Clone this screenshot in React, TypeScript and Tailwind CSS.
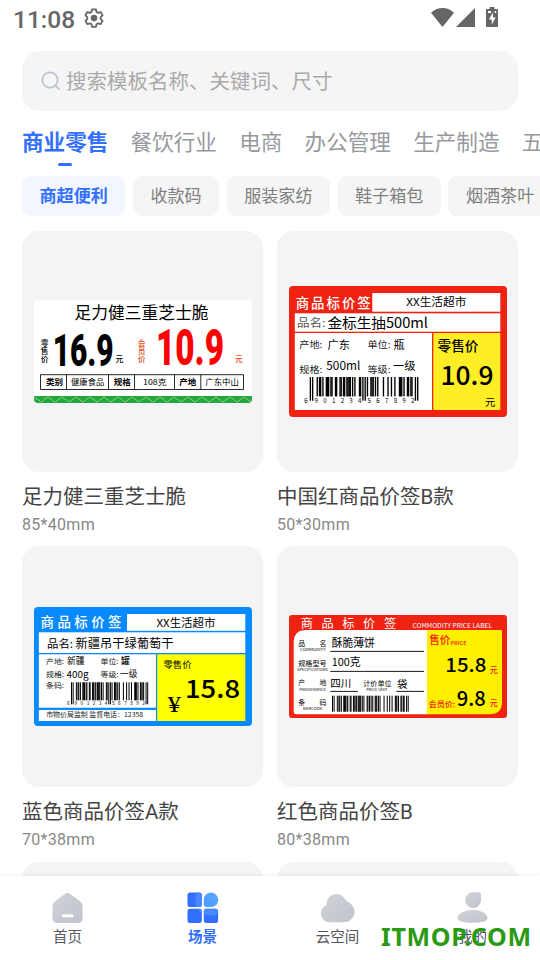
import type { ReactNode } from 'react';

const CJK = '"Noto Sans CJK SC", sans-serif';

const tabs = ['商业零售', '餐饮行业', '电商', '办公管理', '生产制造', '五金建材'];
const categories = ['商超便利', '收款码', '服装家纺', '鞋子箱包', '烟酒茶叶'];

type TProps = {
    x: number;
    y: number;
    w?: number;
    size: number;
    fill?: string;
    weight?: number;
    family?: string;
    squeeze?: boolean;
    children: ReactNode;
};

// text on a label, w is the full width it is set to
const T = ({ x, y, w, size, fill = '#000', weight = 400, family = CJK, squeeze = true, children }: TProps) => (
    <text
        x={x}
        y={y}
        fontSize={size}
        fill={fill}
        fontWeight={weight}
        fontFamily={family}
        textLength={w}
        lengthAdjust={squeeze ? 'spacingAndGlyphs' : 'spacing'}
    >
        {children}
    </text>
);

const L_CODES = ['0001101', '0011001', '0010011', '0111101', '0100011', '0110001', '0101111', '0111011', '0110111', '0001011'];
const PARITY = ['LLLLLL', 'LLGLGG', 'LLGGLG', 'LLGGGL', 'LGLLGG', 'LGGLLG', 'LGGGLL', 'LGLGLG', 'LGLGGL', 'LGGLGL'];
const invert = (s: string) => s.replace(/./g, (c) => (c === '0' ? '1' : '0'));
const reverse = (s: string) => s.split('').reverse().join('');

const ean13 = (code: string) => {
    const digits = code.split('').map(Number);
    const left = digits
        .slice(1, 7)
        .map((d, i) => (PARITY[digits[0]][i] === 'L' ? L_CODES[d] : reverse(invert(L_CODES[d]))))
        .join('');
    const right = digits.slice(7).map((d) => invert(L_CODES[d])).join('');
    return `101${left}01010${right}101`;
};

type BarcodeProps = { x: number; y: number; w: number; h: number; guard?: number };

const Barcode = ({ x, y, w, h, guard = 0 }: BarcodeProps) => {
    const bits = ean13('6901234567892');
    const unit = w / bits.length;
    return (
        <g>
            {bits.split('').map((bit, i) => {
                const long = i < 3 || (i > 44 && i < 50) || i > 91;
                return bit === '1' ? (
                    <rect key={i} x={x + i * unit} y={y} width={unit + 0.2} height={long ? h + guard : h} />
                ) : null;
            })}
        </g>
    );
};

const CheeseLabel = () => (
    <svg width="218" height="103" viewBox="0 0 218 103">
        <clipPath id="cheese">
            <rect width="218" height="103" rx="4" />
        </clipPath>
        <g clipPath="url(#cheese)">
            <rect width="218" height="103" fill="#fff" />
            <T x={40.5} y={19} w={134} size={16.8}>足力健三重芝士脆</T>
            {['零', '售', '价'].map((c, i) => (
                <T key={c} x={6.8} y={45.5 + i * 8} size={7.8} weight={500}>{c}</T>
            ))}
            <T x={18.7} y={66} w={61} size={44.5} weight={900} family="Roboto">16.9</T>
            <T x={81.5} y={62.3} size={7.8} weight={500}>元</T>
            {['会', '员', '价'].map((c, i) => (
                <T key={c} x={103.8} y={45.5 + i * 8} size={7.8} weight={500} fill="#e0521c">{c}</T>
            ))}
            <T x={122} y={65} w={68} size={50.5} weight={900} family="Roboto" fill="#f00">10.9</T>
            <T x={201} y={62.3} size={7.8} weight={500} fill="#e0521c">元</T>
            <path
                d="M6.5 74.7H209.5V89.5H6.5ZM32.5 74.7V89.5M74.5 74.7V89.5M100.5 74.7V89.5M140.5 74.7V89.5M166.8 74.7V89.5"
                fill="none"
                stroke="#111"
                strokeWidth=".9"
            />
            <T x={12} y={85.2} w={17} size={8.4} weight={700}>类别</T>
            <T x={37} y={84.8} w={33.5} size={8.2}>健康食品</T>
            <T x={79.7} y={85.2} w={17} size={8.4} weight={700}>规格</T>
            <T x={109} y={84.8} w={23.5} size={8.2}>108克</T>
            <T x={145.3} y={85.2} w={17} size={8.4} weight={700}>产地</T>
            <T x={171.3} y={84.8} w={33.5} size={8.2}>广东中山</T>
            <rect y="96" width="218" height="7" fill="#22a83f" />
            <path
                d={`M0 97 ${Array.from({ length: 32 }, (_, i) => `L${(i + 1) * 7} ${i % 2 ? 97 : 102}`).join(' ')}`}
                fill="none"
                stroke="#bfe38a"
                strokeWidth=".9"
                strokeDasharray="2 .7"
            />
        </g>
    </svg>
);

const RedLabelB = () => (
    <svg width="218" height="131" viewBox="0 0 218 131">
        <rect width="218" height="131" rx="4" fill="#f02313" />
        <rect x="83.3" y="7" width="128" height="18.7" fill="#fff" />
        <rect x="5.8" y="27.3" width="205.5" height="18.4" fill="#fff" />
        <rect x="5.8" y="47" width="137.2" height="77" fill="#fff" />
        <rect x="144.3" y="47" width="67" height="77" fill="#ffee26" />
        <T x={6.7} y={21.7} w={75} size={13.4} weight={500} fill="#fff" squeeze={false}>商品标价签</T>
        <T x={117.3} y={19.7} w={60} size={11}>XX生活超市</T>
        <T x={8} y={41} w={28.5} size={10.8} fill="#555">品名:</T>
        <T x={38.5} y={41.8} w={100.5} size={14.2}>金标生抽500ml</T>
        <T x={10.3} y={62.3} w={23} size={9.4} fill="#222">产地:</T>
        <T x={38.5} y={63.2} w={22.5} size={11.2}>广东</T>
        <T x={78.5} y={62.3} w={23} size={9.4} fill="#222">单位:</T>
        <T x={104.5} y={63.2} size={11.2}>瓶</T>
        <T x={10.3} y={86.5} w={23} size={9.4} fill="#222">规格:</T>
        <T x={37.3} y={83.5} w={34} size={11.7}>500ml</T>
        <T x={78.5} y={86.5} w={23} size={9.4} fill="#222">等级:</T>
        <T x={104} y={84.3} w={22.5} size={11.2}>一级</T>
        <T x={148.5} y={65.3} w={41} size={13.6} weight={500}>零售价</T>
        <T x={151.5} y={99.2} w={53} size={26} weight={500}>10.9</T>
        <T x={196} y={120.2} size={10.3}>元</T>
        <Barcode x={20.7} y={91} w={108.5} h={19.4} guard={4.3} />
        <T x={15.3} y={116.8} size={6.2}>6</T>
        <T x={25.5} y={116.8} w={47} size={6.2} squeeze={false}>901234</T>
        <T x={78.5} y={116.8} w={47} size={6.2} squeeze={false}>567892</T>
    </svg>
);

const BlueLabelA = () => (
    <svg width="218" height="119" viewBox="0 0 218 119">
        <rect width="218" height="119" rx="4" fill="#078aff" />
        <rect x="93" y="7" width="118.3" height="16.8" fill="#fff" />
        <rect x="4.8" y="25.3" width="206.5" height="20.7" fill="#fff" />
        <rect x="4.8" y="47.3" width="117.2" height="53.4" fill="#fff" />
        <rect x="4.8" y="103" width="117.2" height="11" fill="#fff" />
        <rect x="123.2" y="47.3" width="88.1" height="66.7" fill="#ff0" />
        <T x={6.5} y={19.8} w={81} size={13.4} weight={500} fill="#fff" squeeze={false}>商品标价签</T>
        <T x={122.5} y={19.7} w={59} size={11}>XX生活超市</T>
        <T x={13} y={40.8} w={26} size={11}>品名:</T>
        <T x={41.5} y={41.2} w={98} size={12.3}>新疆吊干绿葡萄干</T>
        <T x={12} y={57.3} w={18} size={7.2} fill="#222">产地:</T>
        <T x={33} y={57.3} w={17.5} size={8.8}>新疆</T>
        <T x={66.5} y={57.3} w={18} size={7.2} fill="#222">单位:</T>
        <T x={87} y={57.3} size={8.8} weight={500}>罐</T>
        <T x={12} y={69.8} w={18} size={7.2} fill="#222">规格:</T>
        <T x={32.5} y={70.8} w={22} size={9.8}>400g</T>
        <T x={66.5} y={69.8} w={18} size={7.2} fill="#222">等级:</T>
        <T x={86} y={70} w={17.5} size={8.8}>一级</T>
        <T x={12} y={81} w={18} size={7.2} fill="#222">条码:</T>
        <T x={129.5} y={60.5} w={28} size={9.3} weight={400}>零售价</T>
        <T x={151} y={90.6} w={55} size={25.5} weight={500}>15.8</T>
        <T x={133.5} y={105.3} w={13.5} size={23} family="Liberation Serif">¥</T>
        <Barcode x={37} y={75.3} w={77} h={18} guard={4} />
        <T x={33} y={97.8} size={4.8}>6</T>
        <T x={40.5} y={97.8} w={33} size={4.8} squeeze={false}>901234</T>
        <T x={78} y={97.8} w={33} size={4.8} squeeze={false}>567892</T>
        <T x={12.2} y={110} w={97} size={6.6} fill="#222">市物价局监制 监督电话：12358</T>
    </svg>
);

const RedLabel = () => (
    <svg width="218" height="103" viewBox="0 0 218 103">
        <rect width="218" height="103" rx="3" fill="#f02313" />
        <path d="M17 15H138V99.3H7.5Q4.7 99.3 4.7 96.5V27.5Q4.7 15 17 15Z" fill="#fff" />
        <path d="M138 15H213V87Q213 99.3 200.5 99.3H138Z" fill="#fff000" />
        {['商', '品', '标', '价', '签'].map((c, i) => (
            <T key={c} x={11.7 + i * 20.8} y={12.7} size={12.2} fill="#fff">{c}</T>
        ))}
        <T x={123.5} y={12.8} w={79.5} size={6.6} fill="#fff">COMMODITY PRICE LABEL</T>
        <T x={9.3} y={30.5} size={6.9}>品</T>
        <T x={30.5} y={30.5} size={6.9}>名</T>
        <T x={11} y={35.9} w={25.5} size={3.8}>COMMODITY</T>
        <T x={9.3} y={50.5} w={28.2} size={6.9}>规格型号</T>
        <T x={8} y={55.7} w={31} size={3.8}>SPECIFICATIONS</T>
        <T x={9.3} y={70.3} size={6.9}>产</T>
        <T x={30.5} y={70.3} size={6.9}>地</T>
        <T x={10.3} y={75.7} w={26.7} size={3.8}>PROVENANCE</T>
        <T x={9.3} y={89.7} size={6.9}>条</T>
        <T x={30.5} y={89.7} size={6.9}>码</T>
        <T x={14} y={94.9} w={19.5} size={3.8}>BARCODE</T>
        <T x={42.7} y={32.3} w={43} size={10.8}>酥脆薄饼</T>
        <T x={42.7} y={51} w={29} size={10.8}>100克</T>
        <T x={41.3} y={72.2} w={21} size={10.4}>四川</T>
        <T x={74.3} y={70.8} w={28.2} size={6.9}>计价单位</T>
        <T x={77.2} y={75.9} w={21.3} size={3.8}>PRICE UNIT</T>
        <T x={108} y={72.5} size={10.4}>袋</T>
        <path d="M41.3 36.4H135M41.3 56.4H135M41.3 76.4H68.8M107.3 76.4H135" stroke="#000" strokeWidth=".9" />
        <Barcode x={43} y={80.7} w={76.5} h={16} />
        <T x={140.2} y={28.8} w={21} size={10.9} weight={500} fill="#f01a10">售价</T>
        <T x={161.5} y={29.8} w={16} size={5.4} weight={500} fill="#f01a10">PRICE</T>
        <T x={156.3} y={57.2} w={41} size={19.2} weight={500}>15.8</T>
        <T x={200.7} y={57.7} size={8} weight={500} fill="#f01a10">元</T>
        <T x={139.7} y={92.4} w={26.5} size={7.6} weight={500} fill="#f01a10">会员价:</T>
        <T x={167.7} y={91.2} w={29} size={20.4} weight={500}>9.8</T>
        <T x={200.7} y={91.2} size={8} weight={500} fill="#f01a10">元</T>
    </svg>
);

const templates = [
    { name: '足力健三重芝士脆', size: '85*40mm', label: <CheeseLabel /> },
    { name: '中国红商品价签B款', size: '50*30mm', label: <RedLabelB /> },
    { name: '蓝色商品价签A款', size: '70*38mm', label: <BlueLabelA /> },
    { name: '红色商品价签B', size: '80*38mm', label: <RedLabel /> },
];

const StatusBar = () => (
    <header className="flex h-[51px] shrink-0 items-start justify-between pt-1 pr-[41px] pl-[13px] text-[#666]">
        <div className="flex items-center gap-2">
            <span className="font-[Roboto] text-[24.500px] leading-8 font-medium">11:08</span>
            <svg width="22" height="22" viewBox="0 0 24 24" className="-mt-1" fill="none" stroke="currentColor" strokeWidth="2" strokeLinejoin="round">
                <path d="M9.9 2.5h4.2l.6 2.8 1.9 1.1 2.7-.9 2.1 3.6-2.1 1.9v2.2l2.1 1.9-2.1 3.6-2.7-.9-1.9 1.1-.6 2.8H9.9l-.6-2.8-1.9-1.1-2.7.9-2.1-3.6 2.1-1.9V11l-2.1-1.9 2.1-3.6 2.7.9 1.9-1.1z" />
                <circle cx="12" cy="12.1" r="3.6" fill="currentColor" stroke="none" />
            </svg>
        </div>
        <div className="flex items-start pt-[3px]">
            <svg width="68" height="21" viewBox="0 0 68 21" fill="currentColor">
                <path d="M0 5.8Q4.5 1 11.5 1T23 5.8L11.5 20Z" />
                <path d="M44 1V20H25Z" />
                <path d="M58.6 0h4.8v2H66q1 0 1 1v16q0 1-1 1H56q-1 0-1-1V3q0-1 1-1h2.6Z" />
                <path d="M57 4h3v2h-3zM63.7 4h1.5v2h-1.5zM61.9 5.5v5h2.800l-4 7.300v-5.200h-2.800z" fill="#fff" />
            </svg>
        </div>
    </header>
);

const HomeIcon = () => (
    <svg width="32" height="32" viewBox="0 0 32 32">
        <path d="M13 1.800Q15.500 -.2 18 1.800L28.500 9.700Q30.500 11.300 30.500 14V26Q30.500 31 25.500 31H5.500Q.5 31 .5 26V14Q.5 11.300 2.500 9.700Z" fill="url(#grey)" />
        <rect x="10" y="22.300" width="11.300" height="3" rx="1" fill="#fff" />
    </svg>
);

const SceneIcon = () => (
    <svg width="32" height="32" viewBox="0 0 32 32">
        <defs>
            <clipPath id="tiles">
                <rect x=".5" y=".5" width="14.300" height="14.500" rx="2.500" />
                <rect x=".5" y="16.800" width="14.300" height="14.300" rx="2.500" />
                <rect x="16.800" y="16.800" width="14.300" height="14.300" rx="2.500" />
            </clipPath>
            <linearGradient id="sky" x1="1" y1="0" x2="0" y2="1">
                <stop offset="0" stopColor="#58a8ff" />
                <stop offset="1" stopColor="#4d9bff" />
            </linearGradient>
        </defs>
        <g clipPath="url(#tiles)">
            <rect width="32" height="32" fill="#336fff" />
            <circle cx="23.500" cy="8.500" r="15.300" fill="#4a88ff" />
        </g>
        <path d="M24 .5A7.200 7.200 0 0 1 24 15H19.500Q16.800 15 16.800 12V7.700A7.200 7.200 0 0 1 24 .5Z" fill="url(#sky)" />
    </svg>
);

const CloudIcon = () => (
    <svg width="34" height="32" viewBox="0 0 34 32">
        <path d="M9 30.300A8.800 8.800 0 0 1 5.500 13.300A10 10 0 0 1 24.200 7.300Q25.500 9.400 27.500 10.300A10.500 10.500 0 0 1 23 30.300Z" fill="url(#grey)" />
    </svg>
);

const UserIcon = () => (
    <svg width="32" height="32" viewBox="0 0 32 32">
        <path d="M16 .3H22.500Q24 .3 24 1.800V8.300A7.900 7.900 0 1 1 16 .3Z" fill="url(#grey)" />
        <path d="M15.500 17.800Q21.500 17.800 26 20.300Q30.500 23 30.500 26Q30.500 30.800 15.500 30.800T.5 26Q.5 23 5 20.300Q9.500 17.800 15.500 17.800Z" fill="url(#grey)" />
    </svg>
);

const navItems = [
    { name: '首页', icon: <HomeIcon /> },
    { name: '场景', icon: <SceneIcon />, active: true },
    { name: '云空间', icon: <CloudIcon /> },
    { name: '我的', icon: <UserIcon /> },
];

const App = () => {
    return (
        <div className="relative flex h-[960px] w-[540px] flex-col overflow-hidden bg-white font-[Roboto,'Noto_Sans_CJK_SC',sans-serif]">
            <svg width="0" height="0" className="absolute">
                <linearGradient id="grey" x1="0" y1="0" x2="1" y2="1">
                    <stop offset="0" stopColor="#d1d3d8" />
                    <stop offset="1" stopColor="#c1c3cc" />
                </linearGradient>
            </svg>
            <StatusBar />
            <div className="mx-[22px] flex h-[60px] shrink-0 items-center gap-[5px] rounded-[18px] bg-[#f5f5f5] pl-[19px]">
                <svg width="20" height="20" viewBox="0 0 20 20" fill="none" stroke="#bcc2d6" strokeWidth="1.7" strokeLinecap="round">
                    <circle cx="9" cy="9" r="7.700" />
                    <path d="M14.800 14.800L18.200 18.200" />
                </svg>
                <span className="pt-0.5 text-[20.500px] leading-none text-[#aaa]">搜索模板名称、关键词、尺寸</span>
            </div>
            <nav className="flex h-[65px] shrink-0 gap-[22.200px] overflow-hidden pt-[17px] pl-[22px] text-[21.600px] leading-[30px] whitespace-nowrap">
                {tabs.map((tab, i) => (
                    <div key={tab} className="flex shrink-0 flex-col items-center gap-[5px]">
                        <span className={i === 0 ? 'font-bold text-[#3370ff]' : 'text-[#97999e]'}>{tab}</span>
                        {i === 0 && <span className="h-[3px] w-[14px] rounded-full bg-[#3370ff]" />}
                    </div>
                ))}
            </nav>
            <div className="flex shrink-0 gap-[7.500px] overflow-hidden pl-[22px] text-[17.100px] whitespace-nowrap">
                {categories.map((category, i) => (
                    <span
                        key={category}
                        className={`flex h-10 shrink-0 items-center rounded-[9px] px-[17.500px] pt-0.5 ${
                            i === 0 ? 'bg-[#f2f7ff] font-bold text-[#3370ff]' : 'bg-[#f5f5f5] text-[#808080]'
                        }`}
                    >
                        {category}
                    </span>
                ))}
            </div>
            <main className="grid h-[660px] shrink-0 grid-cols-[241px_241px] content-start gap-x-[14px] overflow-hidden pt-[15px] pl-[22px]">
                {templates.map(({ name, size, label }) => (
                    <article key={name} className="h-[315px]">
                        <div className="flex h-[241px] items-center justify-center rounded-[17px] bg-[#f4f4f4]">{label}</div>
                        <h2 className="mt-2.5 text-[20.500px] leading-[30px] text-[#444]">{name}</h2>
                        <p className="mt-[2.500px] text-base leading-5 tracking-[0.300px] text-[#888]">{size}</p>
                    </article>
                ))}
                <div className="mt-px h-[241px] rounded-[17px] bg-[#f4f4f4]" />
                <div className="mt-px h-[241px] rounded-[17px] bg-[#f4f4f4]" />
            </main>
            <footer className="relative flex h-[84px] shrink-0 bg-white pt-[15.500px] shadow-[0_-1px_4px_rgba(0,0,0,0.06)]">
                {navItems.map(({ name, icon, active }) => (
                    <div key={name} className="flex flex-1 flex-col items-center gap-1">
                        {icon}
                        <span className={`text-[14.500px] leading-5 ${active ? 'font-bold text-[#3370ff]' : 'text-[#55555f]'}`}>
                            {name}
                        </span>
                    </div>
                ))}
            </footer>
            <span className="absolute top-[920px] left-[381px] font-['Noto_Sans'] text-[25px] leading-8 font-bold tracking-[0.700px] text-[#2a9a14]">
                ITMOP.COM
            </span>
        </div>
    );
};

export default App;
